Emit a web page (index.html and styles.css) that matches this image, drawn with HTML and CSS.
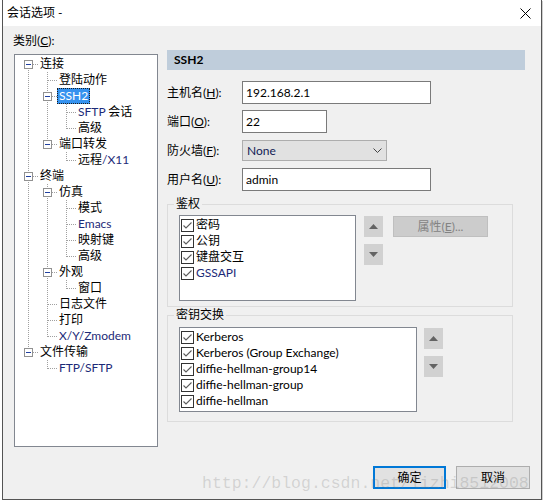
FILE: index.html
```html
<!DOCTYPE html>
<html lang="zh-CN">
<head>
<meta charset="utf-8">
<title>会话选项</title>
<link rel="stylesheet" href="styles.css">
</head>
<body>
<div class="window">
  <div class="titlebar">
    <span class="title">会话选项 -</span>
    <svg class="close" width="11" height="11" viewBox="0 0 11 11"><path d="M0.5 0.5L10.5 10.5M10.5 0.5L0.5 10.5" stroke="#000" stroke-width="1" fill="none"/></svg>
  </div>
  <div class="content">
    <div class="main">
      <div class="left">
        <div class="cat-label">类别(<u>C</u>):</div>
        <div class="tree">
          <div class="row"><span class="c f"><b class="bx"></b></span><span class="txt">连接</span></div>
          <div class="row"><span class="c v"></span><span class="c t"></span><span class="txt">登陆动作</span></div>
          <div class="row"><span class="c v"></span><span class="c t"><b class="bx"></b></span><span class="txt sel">SSH2</span></div>
          <div class="row"><span class="c v"></span><span class="c v"></span><span class="c t"></span><span class="txt"><span class="lt">SFTP</span> 会话</span></div>
          <div class="row"><span class="c v"></span><span class="c v"></span><span class="c l"></span><span class="txt">高级</span></div>
          <div class="row"><span class="c v"></span><span class="c l"><b class="bx"></b></span><span class="txt">端口转发</span></div>
          <div class="row"><span class="c v"></span><span class="c e"></span><span class="c l"></span><span class="txt">远程<span class="lt">/X11</span></span></div>
          <div class="row"><span class="c t"><b class="bx"></b></span><span class="txt">终端</span></div>
          <div class="row"><span class="c v"></span><span class="c t"><b class="bx"></b></span><span class="txt">仿真</span></div>
          <div class="row"><span class="c v"></span><span class="c v"></span><span class="c t"></span><span class="txt">模式</span></div>
          <div class="row"><span class="c v"></span><span class="c v"></span><span class="c t"></span><span class="txt lt">Emacs</span></div>
          <div class="row"><span class="c v"></span><span class="c v"></span><span class="c t"></span><span class="txt">映射键</span></div>
          <div class="row"><span class="c v"></span><span class="c v"></span><span class="c l"></span><span class="txt">高级</span></div>
          <div class="row"><span class="c v"></span><span class="c t"><b class="bx"></b></span><span class="txt">外观</span></div>
          <div class="row"><span class="c v"></span><span class="c v"></span><span class="c l"></span><span class="txt">窗口</span></div>
          <div class="row"><span class="c v"></span><span class="c t"></span><span class="txt">日志文件</span></div>
          <div class="row"><span class="c v"></span><span class="c t"></span><span class="txt">打印</span></div>
          <div class="row"><span class="c v"></span><span class="c l"></span><span class="txt lt">X/Y/Zmodem</span></div>
          <div class="row"><span class="c l"><b class="bx"></b></span><span class="txt">文件传输</span></div>
          <div class="row"><span class="c e"></span><span class="c l"></span><span class="txt lt">FTP/SFTP</span></div>
        </div>
      </div>
      <div class="right">
        <div class="header">SSH2</div>
        <div class="form">
          <span class="label">主机名(<u>H</u>):</span>
          <input class="field w-long" value="192.168.2.1">
          <span class="label">端口(<u>O</u>):</span>
          <input class="field w-port" value="22">
          <span class="label">防火墙(<u>F</u>):</span>
          <div class="select"><span class="sel-text">None</span><svg width="9" height="5" viewBox="0 0 9 5"><path d="M0.5 0.5L4.5 4.5L8.5 0.5" stroke="#444" fill="none"/></svg></div>
          <span class="label">用户名(<u>U</u>):</span>
          <input class="field w-long" value="admin">
        </div>
        <fieldset class="grp g1">
          <legend>鉴权</legend>
          <div class="grp-row">
            <div class="list l1">
              <div class="item"><span class="cb"><svg width="11" height="11" viewBox="0 0 11 11"><path d="M1.5 5.5L4 8L9.5 2.5" stroke="#5c5c5c" stroke-width="1.1" fill="none"/></svg></span>密码</div>
              <div class="item"><span class="cb"><svg width="11" height="11" viewBox="0 0 11 11"><path d="M1.5 5.5L4 8L9.5 2.5" stroke="#5c5c5c" stroke-width="1.1" fill="none"/></svg></span>公钥</div>
              <div class="item"><span class="cb"><svg width="11" height="11" viewBox="0 0 11 11"><path d="M1.5 5.5L4 8L9.5 2.5" stroke="#5c5c5c" stroke-width="1.1" fill="none"/></svg></span>键盘交互</div>
              <div class="item"><span class="cb"><svg width="11" height="11" viewBox="0 0 11 11"><path d="M1.5 5.5L4 8L9.5 2.5" stroke="#5c5c5c" stroke-width="1.1" fill="none"/></svg></span><span class="lt">GSSAPI</span></div>
            </div>
            <div class="arrows">
              <button class="arr"><svg width="9" height="5" viewBox="0 0 9 5"><polygon points="0,5 4.5,0 9,5" fill="#636363"/></svg></button>
              <button class="arr"><svg width="9" height="5" viewBox="0 0 9 5"><polygon points="0,0 9,0 4.5,5" fill="#636363"/></svg></button>
            </div>
            <button class="prop" disabled>属性(<u>E</u>)...</button>
          </div>
        </fieldset>
        <fieldset class="grp g2">
          <legend>密钥交换</legend>
          <div class="grp-row">
            <div class="list l2">
              <div class="item"><span class="cb"><svg width="11" height="11" viewBox="0 0 11 11"><path d="M1.5 5.5L4 8L9.5 2.5" stroke="#5c5c5c" stroke-width="1.1" fill="none"/></svg></span>Kerberos</div>
              <div class="item"><span class="cb"><svg width="11" height="11" viewBox="0 0 11 11"><path d="M1.5 5.5L4 8L9.5 2.5" stroke="#5c5c5c" stroke-width="1.1" fill="none"/></svg></span>Kerberos (Group Exchange)</div>
              <div class="item"><span class="cb"><svg width="11" height="11" viewBox="0 0 11 11"><path d="M1.5 5.5L4 8L9.5 2.5" stroke="#5c5c5c" stroke-width="1.1" fill="none"/></svg></span>diffie-hellman-group14</div>
              <div class="item"><span class="cb"><svg width="11" height="11" viewBox="0 0 11 11"><path d="M1.5 5.5L4 8L9.5 2.5" stroke="#5c5c5c" stroke-width="1.1" fill="none"/></svg></span>diffie-hellman-group</div>
              <div class="item"><span class="cb"><svg width="11" height="11" viewBox="0 0 11 11"><path d="M1.5 5.5L4 8L9.5 2.5" stroke="#5c5c5c" stroke-width="1.1" fill="none"/></svg></span>diffie-hellman</div>
            </div>
            <div class="arrows">
              <button class="arr"><svg width="9" height="5" viewBox="0 0 9 5"><polygon points="0,5 4.5,0 9,5" fill="#636363"/></svg></button>
              <button class="arr"><svg width="9" height="5" viewBox="0 0 9 5"><polygon points="0,0 9,0 4.5,5" fill="#636363"/></svg></button>
            </div>
          </div>
        </fieldset>
      </div>
    </div>
    <div class="footer">
      <button class="btn primary">确定</button>
      <button class="btn">取消</button>
    </div>
  </div>
  <div class="watermark">http://blog.csdn.net/lizhi8512008</div>
</div>
</body>
</html>
```
FILE: styles.css
```css
* { box-sizing: border-box; }
html, body { margin: 0; background: #fff; }
body {
  font: 12px/16px Lato, "Noto Sans CJK SC", sans-serif;
  color: #000;
  --vd: repeating-linear-gradient(to bottom, #a0a0a0 0 1px, transparent 1px 2px);
  --hd: repeating-linear-gradient(to right, #a0a0a0 0 1px, transparent 1px 2px);
}
u { text-decoration: underline; text-underline-offset: 1px; }

.window {
  position: relative;
  margin-left: 2px;
  width: 540px;
  height: 500px;
  border: 1px solid #545454;
  border-top: 0;
  background: #f0f0f0;
  box-shadow: 1px 1px 0 #cfcfcf, 1px 2px 0 #e2e2e2;
  display: flex;
  flex-direction: column;
}
.titlebar {
  height: 26px;
  flex: none;
  background: #fff;
  display: flex;
  align-items: center;
  justify-content: space-between;
  padding: 0 10px 0 4px;
}
.title { line-height: 16px; }

.content { flex: 1; display: flex; flex-direction: column; }
.main { display: flex; }

.left { padding: 7px 0 0 10px; }
.cat-label { line-height: 16px; }
.tree {
  margin: 5px 0 0 1px;
  width: 144px;
  height: 393px;
  border: 1px solid #828790;
  background: #fff;
  padding: 1px 0 0 4px;
}
.row { display: flex; height: 16px; align-items: center; white-space: nowrap; }
.c {
  width: 19px;
  height: 16px;
  flex: none;
  display: flex;
  align-items: center;
  justify-content: center;
  background-repeat: no-repeat;
}
.c.v { background-image: var(--vd); background-size: 1px 16px; background-position: 9px 0; }
.c.t { background-image: var(--vd), var(--hd); background-size: 1px 16px, 9px 1px; background-position: 9px 0, 10px 8px; }
.c.l { background-image: var(--vd), var(--hd); background-size: 1px 9px, 9px 1px; background-position: 9px 0, 10px 8px; }
.c.f { background-image: var(--vd), var(--hd); background-size: 1px 8px, 9px 1px; background-position: 9px 8px, 10px 8px; }
.bx {
  width: 9px;
  height: 9px;
  border: 1px solid #919191;
  background: #fff linear-gradient(#2140a0, #2140a0) center / 5px 1px no-repeat;
  margin-top: 1px;
}
.txt {
  margin-left: 0;
  padding: 0 1px;
  border: 1px solid transparent;
  line-height: 14px;
  height: 16px;
}
.sel { background: #3592ef; color: #fff; border: 1px dotted #1b1b1b; }
.lt { color: #1c2a78; }
.sel.lt, .sel .lt { color: #fff; }

.right { margin-left: 9px; padding-top: 24px; width: 358px; }
.header {
  height: 20px;
  background: #bfcddb;
  font-weight: 700;
  padding-left: 7px;
  line-height: 20px;
}
.form {
  display: grid;
  grid-template-columns: 75px auto;
  grid-auto-rows: 23px;
  row-gap: 6px;
  align-items: center;
  justify-items: start;
  margin-top: 11px;
}
.field {
  height: 23px;
  border: 1px solid #7a7a7a;
  background: #fff;
  padding: 0 3px;
  font: inherit;
  color: #000;
  outline: none;
}
.w-long { width: 189px; }
.w-port { width: 85px; }
.select {
  width: 145px;
  height: 21px;
  border: 1px solid #adadad;
  background: #e1e1e1;
  display: flex;
  align-items: center;
  justify-content: space-between;
  padding: 0 4px 0 4px;
}
.sel-text { color: #111a55; }

.grp {
  margin: 0;
  width: 346px;
  min-width: 0;
  border: 1px solid #dcdcdc;
  padding: 3px 0 5px 11px;
}
.g1 { margin-top: 5px; }
.g2 { padding-top: 4px; padding-bottom: 9px; }
legend { padding: 0 2px; margin-left: -5px; line-height: 16px; }
.grp-row { display: flex; align-items: flex-start; }

.list {
  background: #fff;
  border: 1px solid #828790;
  padding: 1px 0 0 1px;
}
.l1 { width: 177px; height: 86px; }
.l2 { width: 238px; height: 85px; }
.item { display: flex; align-items: center; height: 16px; white-space: nowrap; }
.cb {
  width: 13px;
  height: 13px;
  flex: none;
  border: 1px solid #333;
  background: #fff;
  margin-right: 2px;
  display: flex;
}

.arrows { display: flex; flex-direction: column; gap: 7px; margin: 1px 10px 0 8px; }
.g2 .arrows { margin-left: 7px; }
.arr {
  width: 19px;
  height: 21px;
  border: 0;
  padding: 0;
  background: #d1d1d1;
  display: flex;
  align-items: center;
  justify-content: center;
}
.prop {
  width: 95px;
  height: 21px;
  margin-top: 1px;
  padding: 0;
  background: #cccccc;
  border: 1px solid #bfbfbf;
  color: #838383;
  font: inherit;
}

.footer {
  display: flex;
  justify-content: flex-end;
  gap: 10px;
  padding-right: 11px;
  margin-top: 19px;
}
.btn {
  width: 74px;
  height: 23px;
  padding: 0;
  background: #e1e1e1;
  border: 1px solid #adadad;
  font: inherit;
  color: #000;
}
.btn.primary { width: 73px; border: 2px solid #0078d7; }

.watermark {
  position: absolute;
  left: 199px;
  top: 475px;
  font: 16.5px/17px "Liberation Mono", monospace;
  color: rgba(120, 120, 120, 0.25);
  white-space: nowrap;
  pointer-events: none;
}
```
